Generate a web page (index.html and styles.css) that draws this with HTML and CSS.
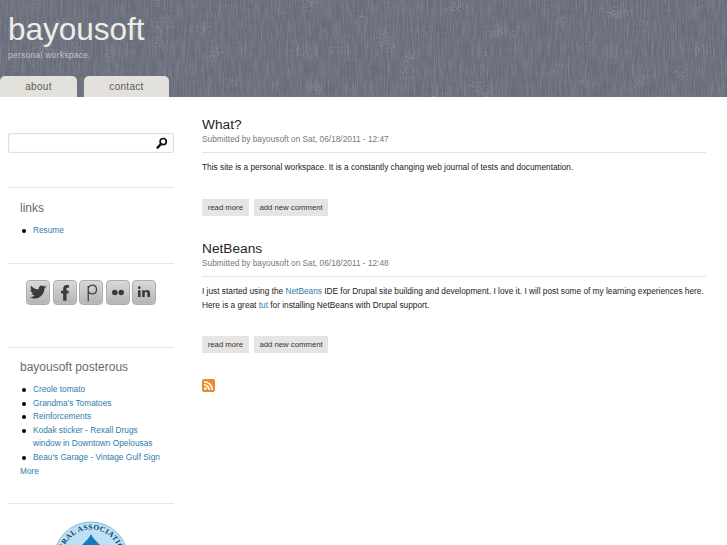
FILE: index.html
```html
<!DOCTYPE html>
<html lang="en">
<head>
<meta charset="utf-8">
<title>bayousoft</title>
<link rel="stylesheet" href="styles.css">
</head>
<body>
<div class="page">
<header class="header">
  <svg class="linen" aria-hidden="true">
    <filter id="warp" x="0" y="0" width="100%" height="100%"><feTurbulence type="fractalNoise" baseFrequency="0.7 0.05" numOctaves="2" seed="3"/><feColorMatrix values="0 0 0 0 0.78 0 0 0 0 0.79 0 0 0 0 0.83 0 0 0 1.2 -0.45"/></filter>
    <filter id="weft" x="0" y="0" width="100%" height="100%"><feTurbulence type="fractalNoise" baseFrequency="0.05 0.7" numOctaves="2" seed="8"/><feColorMatrix values="0 0 0 0 0.30 0 0 0 0 0.32 0 0 0 0 0.38 0 0 0 1.2 -0.45"/></filter>
    <filter id="speck" x="0" y="0" width="100%" height="100%"><feTurbulence type="fractalNoise" baseFrequency="0.04 0.05" numOctaves="2" seed="11" result="big"/><feTurbulence type="fractalNoise" baseFrequency="0.8" numOctaves="1" seed="5" result="fine"/><feComposite in="fine" in2="big" operator="arithmetic" k1="2.200" k2="0" k3="0" k4="0"/><feColorMatrix values="0 0 0 0 0.74 0 0 0 0 0.76 0 0 0 0 0.80 0 0 0 4 -3.400"/></filter>
    <rect width="100%" height="100%" filter="url(#warp)"/>
    <rect width="100%" height="100%" filter="url(#weft)"/>
    <rect width="100%" height="100%" filter="url(#speck)"/>
  </svg>
  <div class="brand">
    <h1 class="site-name">bayousoft</h1>
    <p class="slogan">personal workspace.</p>
  </div>
  <nav class="tabs">
    <a class="tab tab-about">about</a>
    <a class="tab tab-contact">contact</a>
  </nav>
</header>
<div class="columns">
  <aside class="sidebar">
    <div class="search">
      <svg class="search-icon" viewBox="0 0 12 12" aria-hidden="true"><circle cx="7.200" cy="4.600" r="3.100" fill="none" stroke="#111" stroke-width="1.700"/><path d="M5 7 1.600 10.600" stroke="#111" stroke-width="2.400" stroke-linecap="round"/></svg>
    </div>
    <section class="block block-links">
      <h2 class="block-title">links</h2>
      <ul class="list"><li><a>Resume</a></li></ul>
    </section>
    <section class="block block-social">
      <span class="social"><svg viewBox="0 0 24 24"><path d="M3 17.500c3 1.500 7.500 1.800 11-.5 3.400-2.300 5-5.500 5-9l2.500-2.500-2.800.6.100-.1 1.700-2-2.600 1.100C15.500 3.500 12.500 5 12.800 8.500 9.500 8.500 6.500 7 4.500 4.500c-1 2-.4 3.800.9 5l-1.700-.4c.1 1.800 1.200 3 3 3.600l-1.700.1c.6 1.400 1.800 2.200 3.500 2.400-1.500 1.200-3 1.600-5.500 2.300z" fill="#3a3a3a"/></svg></span>
      <span class="social"><svg viewBox="0 0 24 24"><path d="M10 21v-8H7.700v-3H10V8c0-3 1.500-4.300 4-4.300h2.300v3H15c-1 0-1.300.4-1.300 1.400V10h2.500l-.4 3h-2.100v8z" fill="#3a3a3a"/></svg></span>
      <span class="social"><svg viewBox="0 0 24 24"><path d="M9 21.500V5M9 7c1-2 2.600-3 4.500-3 3 0 4.500 2.200 4.500 4.800s-1.500 4.700-4.500 4.700c-2 0-3.500-1-4.500-2.500" fill="none" stroke="#484848" stroke-width="1.500"/></svg></span>
      <span class="social"><svg viewBox="0 0 24 24"><circle cx="8.500" cy="12" r="3" fill="#3a3a3a"/><circle cx="15.500" cy="12" r="3" fill="#3a3a3a"/></svg></span>
      <span class="social"><svg viewBox="0 0 24 24"><path d="M5.500 9.500h2.800V17H5.500zM5.400 6.800a1.500 1.500 0 1 1 3 0 1.500 1.500 0 0 1-3 0zM10 9.500h2.700v1c.6-.8 1.500-1.200 2.600-1.200 2 0 3.200 1.300 3.200 3.500V17h-2.800v-3.900c0-1.100-.4-1.700-1.300-1.700s-1.600.6-1.600 1.800V17H10z" fill="#3a3a3a"/></svg></span>
    </section>
    <section class="block block-posterous">
      <h2 class="block-title">bayousoft posterous</h2>
      <ul class="list">
        <li><a>Creole tomato</a></li>
        <li><a>Grandma's Tomatoes</a></li>
        <li><a>Reinforcements</a></li>
        <li><a>Kodak sticker - Rexall Drugs window in Downtown Opelousas</a></li>
        <li><a>Beau's Garage - Vintage Gulf Sign</a></li>
      </ul>
      <a class="more">More</a>
    </section>
    <section class="block block-badge">
      <svg class="badge" viewBox="0 0 76 76" aria-hidden="true">
        <circle cx="38" cy="38" r="37" fill="#bfe0f3" stroke="#7dbbe0"/>
        <path d="M38 13c3 8 17 14 17 27a17 17 0 0 1-34 0c0-13 14-19 17-27z" fill="#1678bd"/>
        <path d="M31 26c-3 3-5 6-5 9" stroke="#e6f4fb" stroke-width="3" fill="none"/>
        <path id="arc" d="M8.500 38a29.500 29.500 0 0 1 59 0" fill="none"/>
        <text class="badge-text"><textPath href="#arc" startOffset="3">RURAL ASSOCIATION</textPath></text>
      </svg>
    </section>
  </aside>
  <main class="content">
    <article class="post post-first">
      <h2 class="post-title">What?</h2>
      <p class="submitted">Submitted by bayousoft on Sat, 06/18/2011 - 12:47</p>
      <div class="post-body"><p>This site is a personal workspace. It is a constantly changing web journal of tests and documentation.</p></div>
      <div class="post-links"><a class="btn">read more</a><a class="btn">add new comment</a></div>
    </article>
    <article class="post">
      <h2 class="post-title">NetBeans</h2>
      <p class="submitted">Submitted by bayousoft on Sat, 06/18/2011 - 12:48</p>
      <div class="post-body"><p>I just started using the <a class="link">NetBeans</a> IDE for Drupal site building and development. I love it. I will post some of my learning experiences here. Here is a great <a class="link">tut</a> for installing NetBeans with Drupal support.</p></div>
      <div class="post-links"><a class="btn">read more</a><a class="btn">add new comment</a></div>
    </article>
    <svg class="rss" viewBox="0 0 13 13" aria-hidden="true">
      <rect width="13" height="13" rx="2" fill="#ee8a2c"/>
      <circle cx="3.400" cy="9.600" r="1.400" fill="#fff"/>
      <path d="M2 5.800a5.200 5.200 0 0 1 5.200 5.200M2 2.700A8.300 8.300 0 0 1 10.300 11" fill="none" stroke="#fff" stroke-width="1.600"/>
    </svg>
  </main>
</div>
</div>
</body>
</html>
```
FILE: styles.css
```css
* { box-sizing: border-box; }
html, body { margin: 0; padding: 0; }
body { background: #fff; font-family: "Liberation Sans", Arial, sans-serif; color: #222; }
.page { height: 545px; overflow: hidden; }
a { text-decoration: none; }
p, h1, h2, ul { margin: 0; padding: 0; font-weight: normal; }

.header {
  position: relative;
  height: 97px;
  overflow: hidden;
  background-color: #676b79;
  display: flex;
  flex-direction: column;
  justify-content: space-between;
}
.linen { position: absolute; left: 0; top: 0; width: 100%; height: 100%; opacity: .32; }
.brand { position: relative; padding: 11px 0 0 8px; }
.site-name { font-size: 31.500px; line-height: 37px; color: #eeece8; }
.slogan { font-size: 8.500px; line-height: 12px; margin-top: 1px; letter-spacing: .25px; color: #c2c2c4; }
.tabs { position: relative; display: flex; gap: 7px; }
.tab {
  height: 21px;
  display: flex;
  align-items: center;
  justify-content: center;
  border-radius: 5px 5px 0 0;
  background: #e3e1dc;
  color: #5f5b56;
  font-size: 10px;
  letter-spacing: .3px;
}
.tab-about { width: 77px; }
.tab-contact { width: 85px; }

.columns { display: flex; padding: 0 21px 0 8px; gap: 28px; }
.sidebar { width: 166px; flex: none; padding-top: 36px; }
.search {
  height: 20px;
  border: 1px solid #e2dfd8;
  border-radius: 2px;
  display: flex;
  align-items: center;
  justify-content: flex-end;
  padding-right: 5px;
  box-shadow: inset 0 0 1px #ccc;
}
.search-icon { width: 12px; height: 12px; }
.block { border-top: 1px solid #e8e6e1; }
.block-links { margin-top: 34px; height: 76px; padding: 13px 12px 0; }
.block-title { font-size: 12px; line-height: 15px; color: #6e6a66; }
.list { margin-top: 8px; font-size: 8.300px; line-height: 13.600px; list-style: none; }
.list li { padding-left: 13px; position: relative; }
.list li::before {
  content: "";
  position: absolute;
  left: 2px;
  top: 5px;
  width: 4px;
  height: 4px;
  border-radius: 50%;
  background: #000;
}
.list a, .more { color: #2f7cab; }
.block-social { height: 84px; padding-top: 16px; display: flex; justify-content: center; gap: 2.500px; }
.social {
  width: 24px;
  height: 25px;
  border-radius: 4px;
  border: 1px solid #acacac;
  background: linear-gradient(#d8d8d8, #b4b4b4);
  box-shadow: inset 0 0 1px #eee;
}
.social svg { display: block; width: 100%; height: 100%; }
.block-posterous { height: 156px; padding: 12px 12px 0; }
.more { display: block; font-size: 8.300px; line-height: 13.600px; }
.block-badge { display: flex; justify-content: center; padding-top: 17px; }
.badge { width: 76px; height: 76px; flex: none; }
.badge-text { font: bold 7.500px "Liberation Serif", serif; fill: #0d3f6e; letter-spacing: .4px; }

.content { flex: 1; min-width: 0; padding-top: 19px; }
.post-first { height: 124px; }
.post-title { font-size: 13.700px; line-height: 17px; color: #28232b; }
.submitted { font-size: 8.300px; line-height: 13px; color: #777; padding-bottom: 6px; border-bottom: 1px solid #e4e4e4; }
.post-body { padding-top: 8px; font-size: 8.300px; line-height: 13.500px; color: #222; }
.link { color: #2f7cab; }
.post-links { display: flex; gap: 5px; margin-top: 24px; }
.btn {
  height: 17px;
  display: flex;
  align-items: center;
  padding: 0 5.700px;
  background: #e6e5e3;
  font-size: 7.750px;
  color: #333;
}
.rss { display: block; width: 13px; height: 13px; margin-top: 26px; }
```
